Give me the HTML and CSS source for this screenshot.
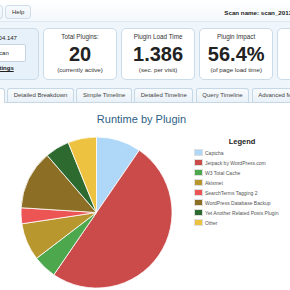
FILE: index.html
```html
<!DOCTYPE html>
<html>
	<head>
		<meta charset="utf-8">
		<title>Plugin Profiler</title>
		<link rel="stylesheet" href="styles.css">
	</head>
	<body>
		<div class="top">
			<div class="topbar">
				<a class="top-btn top-btn-cut" href="javascript:;">Results</a>
				<a class="top-btn" href="javascript:;">Help</a>
				<span class="scan-name">Scan name: scan_2013-05-14_1</span>
			</div>
			<div class="stats">
				<div class="card card-scan">
					<div class="ip">64.104.147</div>
					<a class="scan-btn" href="javascript:;">Scan</a>
					<a class="settings" href="javascript:;">Settings</a>
				</div>
				<div class="card">
					<div class="label">Total Plugins:</div>
					<div class="value">20</div>
					<div class="sub">(currently active)</div>
				</div>
				<div class="card">
					<div class="label">Plugin Load Time</div>
					<div class="value">1.386</div>
					<div class="sub">(sec. per visit)</div>
				</div>
				<div class="card">
					<div class="label">Plugin Impact</div>
					<div class="value">56.4%</div>
					<div class="sub">(of page load time)</div>
				</div>
				<div class="card">
					<div class="label">MySQL Queries</div>
					<div class="value">96</div>
					<div class="sub">(per visit)</div>
				</div>
			</div>
			<nav class="tabs">
				<a href="javascript:;" class="tab active">Runtime by Plugin</a>
				<a href="javascript:;" class="tab">Detailed Breakdown</a>
				<a href="javascript:;" class="tab">Simple Timeline</a>
				<a href="javascript:;" class="tab">Detailed Timeline</a>
				<a href="javascript:;" class="tab">Query Timeline</a>
				<a href="javascript:;" class="tab">Advanced Metrics</a>
			</nav>
		</div>
		<div class="content">
			<h2 class="title">Runtime by Plugin</h2>
			<div class="chart">
				<svg class="pie" width="151" height="151" viewBox="-75.5 -75.5 151 151">
					<g stroke="#fff" stroke-width="0.8" stroke-linejoin="round">
						<path fill="#afd8f8" d="M0 0 L0 -75.5 A75.5 75.5 0 0 1 42.76 -62.22 Z"/>
						<path fill="#cb4b4b" d="M0 0 L42.76 -62.22 A75.5 75.5 0 0 1 -42.66 62.3 Z"/>
						<path fill="#4da74d" d="M0 0 L-42.66 62.3 A75.5 75.5 0 0 1 -59.98 45.86 Z"/>
						<path fill="#b9972f" d="M0 0 L-59.98 45.86 A75.5 75.5 0 0 1 -74.65 11.29 Z"/>
						<path fill="#ed5454" d="M0 0 L-74.65 11.29 A75.5 75.5 0 0 1 -75.35 -4.74 Z"/>
						<path fill="#8c6e24" d="M0 0 L-75.35 -4.74 A75.5 75.5 0 0 1 -49.33 -57.15 Z"/>
						<path fill="#2d6a2f" d="M0 0 L-49.33 -57.15 A75.5 75.5 0 0 1 -28.28 -70 Z"/>
						<path fill="#edc240" d="M0 0 L-28.28 -70 A75.5 75.5 0 0 1 0 -75.5 Z"/>
					</g>
				</svg>
				<div class="legend">
					<div class="legend-title">Legend</div>
					<div class="legend-row"><span class="swatch" style="background:#afd8f8"></span>Captcha</div>
					<div class="legend-row"><span class="swatch" style="background:#cb4b4b"></span>Jetpack by WordPress.com</div>
					<div class="legend-row"><span class="swatch" style="background:#4da74d"></span>W3 Total Cache</div>
					<div class="legend-row"><span class="swatch" style="background:#b9972f"></span>Akismet</div>
					<div class="legend-row"><span class="swatch" style="background:#ed5454"></span>SearchTerms Tagging 2</div>
					<div class="legend-row"><span class="swatch" style="background:#8c6e24"></span>WordPress Database Backup</div>
					<div class="legend-row"><span class="swatch" style="background:#2d6a2f"></span>Yet Another Related Posts Plugin</div>
					<div class="legend-row"><span class="swatch" style="background:#edc240"></span>Other</div>
				</div>
			</div>
		</div>
	</body>
</html>
```

FILE: styles.css
```css
html, body {
	margin: 0;
	padding: 0;
	width: 290px;
	height: 290px;
	overflow: hidden;
}
body {
	font-family: "Liberation Sans", Arial, sans-serif;
	color: #333;
	background: #fff;
}
a {
	color: #333;
	text-decoration: none;
}
.top {
	background: #eef5fb;
	white-space: nowrap;
}
.topbar {
	display: flex;
	align-items: flex-end;
	height: 22px;
	box-sizing: border-box;
	padding-top: 5px;
	background: linear-gradient(#fff, #f3f8fc);
	border-bottom: 1px solid #dde8f1;
}
.top-btn {
	flex-shrink: 0;
	height: 14px;
	box-sizing: border-box;
	margin-bottom: 2px;
	margin-right: 2px;
	padding: 0 6px;
	font-size: 6px;
	line-height: 12px;
	border: 1px solid #cfdde8;
	border-radius: 3px;
	background: linear-gradient(#f8fbfd, #edf3f8);
}
.top-btn-cut {
	width: 44px;
	margin-left: -41px;
	text-align: left;
}
.scan-name {
	margin-left: 191px;
	margin-bottom: 5px;
	font-size: 6.2px;
	font-weight: bold;
	color: #222;
}
.stats {
	display: flex;
	gap: 3.5px;
	margin-left: -35.4px;
	padding-top: 6px;
}
.card {
	flex-shrink: 0;
	width: 74.6px;
	height: 52px;
	box-sizing: border-box;
	border: 1px solid #cbdbe8;
	border-radius: 5px;
	background: #fff;
	text-align: center;
}
.card-scan {
	display: flex;
	flex-direction: column;
	align-items: center;
	background: #e6f1fa;
}
.ip {
	margin-top: 6px;
	font-size: 6px;
	line-height: 7px;
	color: #222;
}
.scan-btn {
	width: 48px;
	height: 18px;
	box-sizing: border-box;
	margin-top: 2px;
	border: 1px solid #c5d4e0;
	border-radius: 2px;
	background: #fff;
	font-size: 6px;
	line-height: 16px;
	color: #222;
}
.settings {
	margin-top: 3px;
	font-size: 6px;
	line-height: 7px;
	font-weight: bold;
	text-decoration: underline;
	color: #222;
}
.label {
	margin-top: 4.3px;
	font-size: 6.3px;
	line-height: 7px;
}
.value {
	margin-top: 3.8px;
	font-size: 20px;
	line-height: 20px;
	font-weight: bold;
	color: #222;
}
.sub {
	margin-top: 1.7px;
	font-size: 6.2px;
	line-height: 7px;
}
.tabs {
	display: flex;
	align-items: flex-end;
	gap: 2.5px;
	height: 14px;
	margin-top: 8px;
	margin-left: -57px;
	border-bottom: 1px solid #c6d8e6;
}
.tab {
	flex-shrink: 0;
	height: 14px;
	box-sizing: border-box;
	padding: 0 5.5px;
	font-size: 6px;
	line-height: 13px;
	color: #444;
	border: 1px solid #c6d8e6;
	border-bottom: none;
	border-radius: 3px 3px 0 0;
	background: linear-gradient(#f8fbfd, #e9f1f8);
}
.tab.active {
	height: 15px;
	margin-bottom: -1px;
	background: #fff;
}
.content {
	background: #fff;
}
.title {
	margin: 10px 0 0;
	padding-right: 7px;
	font-size: 11px;
	line-height: 13px;
	font-weight: normal;
	text-align: center;
	color: #2e5f86;
}
.chart {
	display: flex;
	align-items: flex-start;
	margin-top: 10.5px;
	padding-left: 20.5px;
}
.pie {
	flex-shrink: 0;
	display: block;
}
.legend {
	width: 97px;
	margin-left: 22px;
	flex-shrink: 0;
}
.legend-title {
	font-size: 7.5px;
	line-height: 9px;
	font-weight: bold;
	text-align: center;
	color: #222;
	margin-bottom: 2px;
}
.legend-row {
	display: flex;
	align-items: center;
	height: 10px;
	font-size: 5px;
	color: #545454;
}
.swatch {
	width: 9px;
	height: 7px;
	box-sizing: border-box;
	border: 1px solid #dedede;
	margin-right: 2.5px;
}
```
